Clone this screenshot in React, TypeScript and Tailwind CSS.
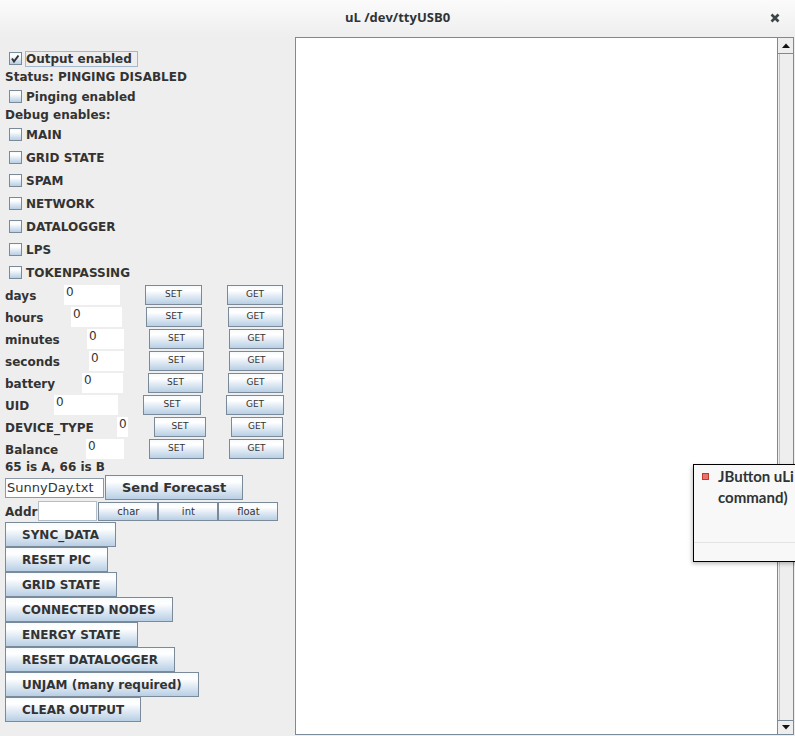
import React from "react";

const grad =
  "bg-[linear-gradient(180deg,#f7fafc_0%,#ffffff_25%,#dde8f3_60%,#b8cfe5_100%)]";

function Check({ label, checked, focused }: { label: string; checked?: boolean; focused?: boolean }) {
  return (
    <div className="h-[23px] flex items-center pl-[9px]">
      <span className={"w-[13px] h-[13px] border border-[#7a8a99] flex items-center justify-center " + grad}>
        {checked && (
          <svg width="11" height="11" viewBox="0 0 11 11">
            <path d="M2 5.5 L4 8.5 L8.5 2.5" stroke="#333333" strokeWidth="2" fill="none" />
          </svg>
        )}
      </span>
      <span
        className={
          "ml-[3px] border pr-[5px] leading-[14px] text-[12px] font-bold text-[#333333] " +
          (focused ? "border-[#a3b8cc]" : "border-transparent")
        }
      >
        {label}
      </span>
    </div>
  );
}

function Label({ text }: { text: string }) {
  return <div className="h-[15px] leading-[15px] pl-[5px] text-[12px] font-bold text-[#333333]">{text}</div>;
}

function SmallBtn({ text, w }: { text: string; w: string }) {
  return (
    <button className={"h-[20px] border border-[#7a8a99] text-[9px] text-[#333333] flex items-center justify-center " + w + " " + grad}>
      {text}
    </button>
  );
}

const rows = [
  { label: "days", lw: "w-[59px]", fw: "w-[56px]", sm: "ml-[25px]", sw: "w-[57px]", gm: "ml-[25px]", gw: "w-[56px]" },
  { label: "hours", lw: "w-[66px]", fw: "w-[51px]", sm: "ml-[24px]", sw: "w-[56px]", gm: "ml-[26px]", gw: "w-[55px]" },
  { label: "minutes", lw: "w-[82px]", fw: "w-[37px]", sm: "ml-[25px]", sw: "w-[55px]", gm: "ml-[25px]", gw: "w-[55px]" },
  { label: "seconds", lw: "w-[84px]", fw: "w-[35px]", sm: "ml-[25px]", sw: "w-[55px]", gm: "ml-[25px]", gw: "w-[55px]" },
  { label: "battery", lw: "w-[77px]", fw: "w-[41px]", sm: "ml-[25px]", sw: "w-[55px]", gm: "ml-[25px]", gw: "w-[55px]" },
  { label: "UID", lw: "w-[49px]", fw: "w-[64px]", sm: "ml-[25px]", sw: "w-[58px]", gm: "ml-[25px]", gw: "w-[58px]" },
  { label: "DEVICE_TYPE", lw: "w-[112px]", fw: "w-[11px]", sm: "ml-[26px]", sw: "w-[52px]", gm: "ml-[25px]", gw: "w-[52px]" },
  { label: "Balance", lw: "w-[81px]", fw: "w-[38px]", sm: "ml-[25px]", sw: "w-[55px]", gm: "ml-[25px]", gw: "w-[55px]" },
];

const actions = [
  "SYNC_DATA",
  "RESET PIC",
  "GRID STATE",
  "CONNECTED NODES",
  "ENERGY STATE",
  "RESET DATALOGGER",
  "UNJAM (many required)",
  "CLEAR OUTPUT",
];

export default function App() {
  return (
    <div className="w-[795px] h-[736px] overflow-hidden relative bg-[#eeeeee] font-['DejaVu_Sans',sans-serif] text-[#333333]">
      {/* title bar */}
      <div className="h-[37px] grid grid-cols-[1fr_auto_1fr] items-center bg-[linear-gradient(180deg,#fbfbfb,#eeeeee)]">
        <div />
        <div className="font-['Open_Sans',sans-serif] font-bold text-[13px] text-[#2e3436] pb-[2px]">uL /dev/ttyUSB0</div>
        <div className="flex justify-end pr-[15px] pb-[2px]">
          <svg width="10" height="10" viewBox="0 0 10 10">
            <path d="M1.5 1.5 L8.5 8.5 M8.5 1.5 L1.5 8.5" stroke="#3b4447" strokeWidth="2.6" />
          </svg>
        </div>
      </div>

      <div className="flex">
        {/* left controls */}
        <div className="w-[295px] flex flex-col pt-[10px]">
          <Check label="Output enabled" checked focused />
          <Label text="Status: PINGING DISABLED" />
          <Check label="Pinging enabled" />
          <Label text="Debug enables:" />
          {["MAIN", "GRID STATE", "SPAM", "NETWORK", "DATALOGGER", "LPS", "TOKENPASSING"].map((d) => (
            <Check key={d} label={d} />
          ))}

          {rows.map((r) => (
            <div key={r.label} className="h-[22px] flex items-start pl-[5px]">
              <div className={"h-[22px] leading-[24px] text-[12px] font-bold whitespace-nowrap " + r.lw}>{r.label}</div>
              <div className={"mt-[1px] h-[20px] bg-white text-[12px] leading-[15px] pl-[2px] overflow-hidden " + r.fw}>0</div>
              <div className={"mt-[1px] " + r.sm}>
                <SmallBtn text="SET" w={r.sw} />
              </div>
              <div className={"mt-[1px] " + r.gm}>
                <SmallBtn text="GET" w={r.gw} />
              </div>
            </div>
          ))}

          <Label text="65 is A, 66 is B" />

          <div className="h-[25px] flex items-center pl-[5px]">
            <div className="w-[99px] h-[20px] border border-[#8c99a6] bg-white text-[13px] leading-[18px] pl-[1px]">
              SunnyDay.txt
            </div>
            <button className={"ml-[1px] h-[25px] border border-[#7a8a99] px-[16px] text-[13px] font-bold " + grad}>
              Send Forecast
            </button>
          </div>

          <div className="h-[22px] flex items-center pl-[5px]">
            <div className="h-[22px] leading-[24px] text-[12px] font-bold">Addr</div>
            <div className="ml-[1px] w-[59px] h-[20px] border border-[#b4bec8] bg-white" />
            <div className="ml-[1px] flex">
              {["char", "int", "float"].map((t) => (
                <button
                  key={t}
                  className={"w-[60px] h-[19px] border border-[#7a8a99] text-[10px] flex items-center justify-center " + grad}
                >
                  {t}
                </button>
              ))}
            </div>
          </div>

          <div className="flex flex-col items-start pl-[5px]">
            {actions.map((a) => (
              <button
                key={a}
                className={"h-[25px] border border-[#7a8a99] px-[16px] text-[12px] font-bold whitespace-nowrap " + grad}
              >
                {a}
              </button>
            ))}
          </div>
        </div>

        {/* output text area */}
        <div className="w-[499px] h-[698px] border border-[#7a8a99] bg-white flex">
          <div className="flex-1" />
          <div className="w-[16px] border-l border-[#7a8a99] bg-[#eeeeee] flex flex-col">
            <div className="h-[16px] border-b border-[#7a8a99] flex items-center justify-center">
              <svg width="8" height="5" viewBox="0 0 8 5">
                <path d="M0 5 L4 0.5 L8 5 Z" fill="#111111" />
              </svg>
            </div>
            <div className="flex-1 ml-[1px] border-l border-[#b3c6da]" />
            <div className="h-[14px] border-t border-[#7a8a99] flex items-center justify-center">
              <svg width="8" height="5" viewBox="0 0 8 5">
                <path d="M0 0 L8 0 L4 4.5 Z" fill="#111111" />
              </svg>
            </div>
          </div>
        </div>
      </div>

      {/* tooltip */}
      <div className="absolute left-[693px] top-[464px] w-[110px] h-[98px] border border-black bg-[#f8f8f8] shadow-[-1px_2px_4px_rgba(0,0,0,0.25)] flex flex-col">
        <div className="h-[78px] border-b border-[#e4e4e4] flex items-start pt-[8px] pl-[8px]">
          <span className="w-[7px] h-[7px] border border-[#c0392b] bg-[#ec7070] shrink-0" />
          <div className="ml-[9px] -mt-[7px] font-['Lato',sans-serif] font-bold text-[15px] leading-[21px] text-[#2e3436] whitespace-nowrap">
            <div>JButton uLi</div>
            <div>command)</div>
          </div>
        </div>
      </div>
    </div>
  );
}
